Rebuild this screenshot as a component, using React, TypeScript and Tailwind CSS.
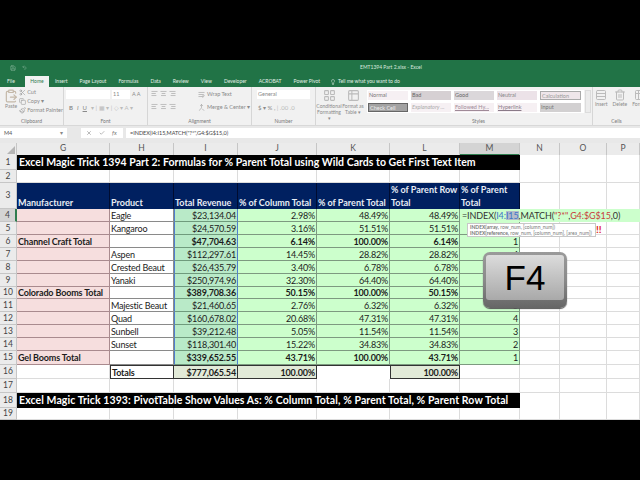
import { ClipboardPaste, Scissors, Copy, Paintbrush, X, Check, Lightbulb, Undo2, Save, AlignLeft, AlignCenter, AlignRight, WrapText, Merge, Table2, LayoutGrid, Rows3, Trash2 } from "lucide-react";

const cols = "grid grid-cols-[17px_93px_64px_64px_79px_73px_70px_60px_40px_47px_33px]";
const pink = "bg-[#f6dede] border-b border-r border-b-[#a98a8e] border-r-[#a98a8e]";
const green = "bg-[#ccffcc] border-b border-r border-[#7d9a80]";
const white = "bg-white border-b border-r border-[#8a8a8a]";
const rev = "bg-[#b9eac8] border-b border-x border-b-[#6f9a7c] border-x-[#4f7fd0]";
const grid = "bg-white border-b border-r border-[#dcdcdc]";

const data: [number, string, string, string, string, string, string, string, number, boolean][] = [
  [5, "", "Kangaroo", "$24,570.59", "3.16%", "51.51%", "51.51%", "", 13, false],
  [6, "Channel Craft Total", "", "$47,704.63", "6.14%", "100.00%", "6.14%", "1", 13, true],
  [7, "", "Aspen", "$112,297.61", "14.45%", "28.82%", "28.82%", "4", 13, false],
  [8, "", "Crested Beaut", "$26,435.79", "3.40%", "6.78%", "6.78%", "3", 13, false],
  [9, "", "Yanaki", "$250,974.96", "32.30%", "64.40%", "64.40%", "2", 13, false],
  [10, "Colorado Booms Total", "", "$389,708.36", "50.15%", "100.00%", "50.15%", "1", 12, true],
  [11, "", "Majestic Beaut", "$21,460.65", "2.76%", "6.32%", "6.32%", "5", 13, false],
  [12, "", "Quad", "$160,678.02", "20.68%", "47.31%", "47.31%", "4", 13, false],
  [13, "", "Sunbell", "$39,212.48", "5.05%", "11.54%", "11.54%", "3", 13, false],
  [14, "", "Sunset", "$118,301.40", "15.22%", "34.83%", "34.83%", "2", 13, false],
  [15, "Gel Booms Total", "", "$339,652.55", "43.71%", "100.00%", "43.71%", "1", 14, true],
];

const styleCells = [
  ["Normal", "bg-[#f6f0f3] text-[#777]"],
  ["Bad", "bg-[#d6d0d3] text-[#666]"],
  ["Good", "bg-[#dbd7da] text-[#666]"],
  ["Neutral", "bg-[#ece2e8] text-[#888]"],
  ["Calculation", "bg-[#efe6ea] text-[#999] border border-[#aaa]"],
  ["Check Cell", "bg-[#a3a3a3] text-[#eee] border border-[#666]"],
  ["Explanatory ...", "bg-[#f6f0f3] text-[#aaa] italic"],
  ["Followed Hy...", "bg-[#f6f0f3] text-[#a08a98] underline"],
  ["Hyperlink", "bg-[#f6f0f3] text-[#8a7a88] underline"],
  ["Input", "bg-[#d2d0d1] text-[#777]"],
];

function Num({ n, h, active }: { n: number; h: number; active?: boolean }) {
  return (
    <div
      style={{ height: h }}
      className={`flex items-center justify-center border-b border-r border-[#c6c6c6] text-[8.5px] text-[#444] ${active ? "bg-[#d4d4d4] border-r-[#2f7d4f] border-r-2" : "bg-[#ebebeb]"}`}
    >
      {n}
    </div>
  );
}

function Cell({ c, t, bold, right, h }: { c: string; t?: string; bold?: boolean; right?: boolean; h: number }) {
  return (
    <div
      style={{ height: h }}
      className={`flex items-center overflow-hidden whitespace-nowrap px-[1px] text-[9px] leading-none text-[#1c1c1c] ${c} ${bold ? "font-bold tracking-[-0.15px]" : "tracking-[-0.2px]"} ${right ? "justify-end" : ""}`}
    >
      {t}
    </div>
  );
}

function Blank({ n }: { n: number }) {
  return (
    <>
      {Array.from({ length: n }).map((_, i) => (
        <div key={i} className="border-b border-r border-[#dcdcdc] bg-white" />
      ))}
    </>
  );
}

function Group({ label, w, children }: { label: string; w: string; children: React.ReactNode }) {
  return (
    <div className={`flex flex-col border-r border-[#d6d6d6] ${w}`}>
      <div className="flex-1 min-h-0">{children}</div>
      <div className="h-[8px] text-center text-[5px] leading-[8px] text-[#777]">{label}</div>
    </div>
  );
}

function Ribbon() {
  const ic = "h-[7px] w-[7px] text-[#9a9a9a]";
  return (
    <div className="flex h-[39px] overflow-hidden bg-[#f1f1f1] text-[5.5px] text-[#8a8a8a] border-b border-[#d8d8d8]">
      <Group label="Clipboard" w="w-[64px] shrink-0">
        <div className="flex pt-[2px] pl-[4px]">
          <div className="flex w-[15px] flex-col items-center">
            <ClipboardPaste className="h-[14px] w-[14px] text-[#c4b8a8]" />
            <span className="text-[5px]">Paste</span>
          </div>
          <div className="ml-[1px] flex flex-col gap-[2px] whitespace-nowrap leading-[7px]">
            <span className="flex items-center gap-[1px]"><Scissors className={ic} />Cut</span>
            <span className="flex items-center gap-[1px]"><Copy className={ic} />Copy ▾</span>
            <span className="flex items-center gap-[1px]"><Paintbrush className={ic} />Format Painter</span>
          </div>
        </div>
      </Group>
      <Group label="Font" w="w-[84px] shrink-0">
        <div className="flex gap-[2px] pt-[3px] pl-[2px]">
          <div className="h-[9px] w-[44px] bg-white" />
          <div className="h-[9px] w-[18px] bg-white pl-[1px] leading-[9px]">11</div>
          <span className="leading-[9px]">A A</span>
        </div>
        <div className="flex gap-[4px] pt-[4px] pl-[5px] text-[6px]">
          <b>B</b><i>I</i><u>U</u><span className="whitespace-nowrap text-[#bbb]">▾ | ▦ ▾ | ◇ ▾ A ▾</span>
        </div>
      </Group>
      <Group label="Alignment" w="w-[104px] shrink-0">
        <div className="flex gap-[2px] pt-[3px] pl-[3px]">
          <AlignLeft className={ic} /><AlignCenter className={ic} /><AlignRight className={ic} />
          <span className="ml-[20px] flex items-center gap-[2px] whitespace-nowrap"><WrapText className={ic} />Wrap Text</span>
        </div>
        <div className="flex gap-[2px] pt-[5px] pl-[3px]">
          <AlignLeft className={ic} /><AlignCenter className={ic} /><AlignRight className={ic} />
          <span className="ml-[20px] flex items-center gap-[2px] whitespace-nowrap"><Merge className={ic} />Merge &amp; Center ▾</span>
        </div>
      </Group>
      <Group label="Number" w="w-[64px] shrink-0">
        <div className="mx-[5px] mt-[3px] h-[9px] bg-white pl-[1px] leading-[9px]">General</div>
        <div className="whitespace-nowrap pt-[4px] pl-[6px] text-[6px]">$ ▾ % , <span className="text-[#bbb]">| .00 .0</span></div>
      </Group>
      <Group label="" w="w-[49px] shrink-0 border-r-0">
        <div className="flex pt-[2px] text-center text-[5px] leading-[6px]">
          <div className="flex w-[26px] flex-col items-center"><LayoutGrid className="mb-[1px] h-[13px] w-[13px] text-[#bbb]" />Conditional Formatting ▾</div>
          <div className="flex w-[22px] flex-col items-center"><Table2 className="mb-[1px] h-[13px] w-[13px] text-[#bbb]" />Format as Table ▾</div>
        </div>
      </Group>
      <Group label="Styles" w="w-[228px] shrink-0">
        <div className="mt-[3px] ml-[2px] flex">
          <div className="grid w-[217px] grid-cols-[40px_40px_40px_40px_41px] gap-x-[3px] gap-y-[3px] bg-white p-[1px]">
            {styleCells.map(([t, c]) => (
              <div key={t} className={`h-[9px] overflow-hidden whitespace-nowrap pl-[1px] text-[5.5px] leading-[8px] ${c}`}>{t}</div>
            ))}
          </div>
          <div className="ml-[1px] w-[6px] border border-[#dcdcdc] bg-[#ececec]" />
        </div>
      </Group>
      <Group label="Cells" w="min-w-0 flex-1 overflow-hidden border-r-0">
        <div className="flex gap-[5px] pt-[2px] pl-[2px] text-center text-[5px]">
          <div className="flex flex-col items-center"><Rows3 className="h-[12px] w-[12px] text-[#bbb]" />Insert</div>
          <div className="flex flex-col items-center"><Trash2 className="h-[12px] w-[12px] text-[#bbb]" />Delete</div>
          <div className="flex flex-col items-center"><Table2 className="h-[12px] w-[12px] text-[#bbb]" />Format</div>
        </div>
      </Group>
    </div>
  );
}

export default function App() {
  const tabs = ["Insert", "Page Layout", "Formulas", "Data", "Review", "View", "Developer", "ACROBAT", "Power Pivot"];
  const letters = ["G", "H", "I", "J", "K", "L", "M", "N", "O", "P"];
  return (
    <div className="relative flex h-[480px] w-[640px] flex-col overflow-hidden bg-black font-['Lato',sans-serif]">
      <div className="h-[60px] shrink-0" />
      {/* title bar and tabs */}
      <div className="flex h-[15px] shrink-0 items-center bg-[#217346] text-[5px] text-[#d8e8de]">
        <Save className="ml-[10px] h-[6px] w-[6px] opacity-60" />
        <Undo2 className="ml-[6px] h-[5px] w-[5px] opacity-60" />
        <span className="ml-[333px]">EMT1394 Part 2.xlsx - Excel</span>
      </div>
      <div className="flex h-[12px] shrink-0 items-end whitespace-nowrap bg-[#217346] text-[5px] leading-[11px] text-[#e2efe7]">
        <span className="ml-[7px] w-[18px]">File</span>
        <span className="w-[24px] bg-[#f1f1f1] text-center text-[#2d7a4e]">Home</span>
        <div className="ml-[6px] flex gap-[12px]">
          {tabs.map((t) => <span key={t}>{t}</span>)}
        </div>
        <span className="ml-[10px] flex items-center gap-[2px]"><Lightbulb className="h-[6px] w-[6px]" />Tell me what you want to do</span>
      </div>
      <Ribbon />
      {/* formula bar */}
      <div className="h-[17px] shrink-0 bg-[#e8e8e8] pt-[2px]">
        <div className="flex h-[10px] text-[5.5px] leading-[10px] text-[#555]">
          <div className="flex w-[67px] justify-between bg-white px-[4px]"><span>M4</span><span className="text-[#888]">▾</span></div>
          <div className="ml-[14px] flex w-[42px] items-center gap-[7px] bg-white pl-[5px] text-[#777]">
            <X className="h-[6px] w-[6px]" /><Check className="h-[6px] w-[6px]" /><i className="text-[6px]">fx</i>
          </div>
          <div className="ml-[3px] flex-1 bg-white pl-[4px] text-[#444]">=INDEX(I4:I15,MATCH("?*",G4:$G$15,0)</div>
        </div>
      </div>
      {/* column letters */}
      <div className={`${cols} h-[12px] shrink-0 bg-[#ebebeb] text-center text-[8.5px] leading-[11px] text-[#555]`}>
        <div className="flex items-end justify-end border-b border-r border-[#c6c6c6] pr-[1px] pb-[1px]">
          <svg width="8" height="8" viewBox="0 0 8 8"><path d="M8 0V8H0Z" fill="#b5b5b5" /></svg>
        </div>
        {letters.map((l) => (
          <div key={l} className={`border-b border-r border-[#c6c6c6] ${l === "M" ? "bg-[#d4d4d4] border-b-2 border-b-[#2f7d4f]" : ""}`}>{l}</div>
        ))}
      </div>
      {/* sheet */}
      <div className="h-[265px] shrink-0 bg-white">
        <div className={`${cols} h-[15px]`}>
          <Num n={1} h={15} />
          <div className="col-span-7 flex items-center whitespace-nowrap bg-black pl-[2px] text-[10.5px] font-bold tracking-[0.03px] text-white">
            Excel Magic Trick 1394 Part 2: Formulas for % Parent Total using Wild Cards to Get First Text Item
          </div>
          <Blank n={3} />
        </div>
        <div className={`${cols} h-[13px]`}>
          <Num n={2} h={13} />
          <Blank n={10} />
        </div>
        <div className={`${cols} h-[26px]`}>
          <Num n={3} h={26} />
          {[
            ["Manufacturer", "border-b-[#c04040]"],
            ["Product", "border-b-[#001a50]"],
            ["Total Revenue", "border-b-[#4f7fd0]"],
            ["% of Column Total", "border-b-[#001a50]"],
            ["% of Parent Total", "border-b-[#001a50]"],
            ["% of Parent Row Total", "border-b-[#001a50]"],
            ["% of Parent Total", "border-b-[#001a50]"],
          ].map(([t, c], i) => (
            <div key={i} className={`flex items-end border-b border-r border-r-[#000c30] bg-[#002060] px-[1px] pb-[1px] text-[9px] leading-[13px] font-bold text-[#e8ecf4] ${c} ${i > 4 ? "whitespace-normal" : "whitespace-nowrap"}`}>
              {t}
            </div>
          ))}
          <Blank n={3} />
        </div>
        <div className={`${cols} h-[13px]`}>
          <Num n={4} h={13} active />
          <Cell h={13} c={pink} />
          <Cell h={13} c={white} t="Eagle" />
          <Cell h={13} c={rev} t="$23,134.04" right />
          <Cell h={13} c={green} t="2.98%" right />
          <Cell h={13} c={green} t="48.49%" right />
          <Cell h={13} c={green} t="48.49%" right />
          <div className="col-span-4 flex items-center whitespace-nowrap bg-[#ccffcc] pl-[2px] text-[9px] leading-none tracking-[-0.1px] text-[#333]">
            =INDEX(<span className="text-[#3f74c8]">I4:</span><span className="bg-[#b4bcc8] text-[#3f74c8]">I15</span>,MATCH(<span className="text-[#c8403c]">"?*"</span>,<span className="text-[#c8403c]">G4:$G$15</span>,0)
          </div>
        </div>
        {data.map(([n, g, h, i, j, k, l, m, rh, b]) => (
          <div key={n} className={cols}>
            <Num n={n} h={rh} />
            <Cell h={rh} c={pink} t={g} bold={b} />
            <Cell h={rh} c={white} t={h} />
            <Cell h={rh} c={n === 15 ? `${rev} border-b-[#4f7fd0]` : rev} t={i} right bold={b} />
            <Cell h={rh} c={green} t={j} right bold={b} />
            <Cell h={rh} c={green} t={k} right bold={b} />
            <Cell h={rh} c={green} t={l} right bold={b} />
            <Cell h={rh} c={green} t={m} right />
            <Blank n={3} />
          </div>
        ))}
        <div className={`${cols} h-[14px]`}>
          <Num n={16} h={14} />
          <Cell h={14} c={grid} />
          <Cell h={14} c="bg-white border-y border-r border-[#333] border-l" t="Totals" bold />
          <Cell h={14} c="bg-[#e2ead8] border-y border-r border-[#333]" t="$777,065.54" right bold />
          <Cell h={14} c="bg-[#e2ead8] border-y border-r border-[#333]" t="100.00%" right bold />
          <Cell h={14} c="bg-white border-t border-[#333] border-b-[#dcdcdc]" />
          <Cell h={14} c="bg-[#e2ead8] border-y border-x border-[#333]" t="100.00%" right bold />
          <Blank n={4} />
        </div>
        <div className={`${cols} h-[14px]`}>
          <Num n={17} h={14} />
          <Blank n={10} />
        </div>
        <div className={`${cols} h-[15px]`}>
          <Num n={18} h={15} />
          <div className="col-span-7 flex items-center whitespace-nowrap bg-black pl-[2px] text-[10.5px] font-bold tracking-[0.09px] text-white">
            Excel Magic Trick 1393: PivotTable Show Values As: % Column Total, % Parent Total, % Parent Row Total
          </div>
          <Blank n={3} />
        </div>
        <div className={`${cols} h-[12px]`}>
          <Num n={19} h={12} />
          <Blank n={10} />
        </div>
      </div>
      {/* function tooltip */}
      <div className="absolute left-[467px] top-[223px] h-[14px] w-[129px] border border-[#c8c8c8] bg-white px-[2px] text-[5px] leading-[6px] whitespace-nowrap text-[#777]">
        <div><b>INDEX(array,</b> row_num, [column_num])</div>
        <div><b>INDEX(reference,</b> row_num, [column_num], [area_num])</div>
      </div>
      <div className="absolute left-[596px] top-[223px] text-[10px] leading-[13px] font-bold text-[#e02020]">!!</div>
      {/* F4 key */}
      <div className="absolute left-[483px] top-[252px] h-[56px] w-[84px] rounded-[7px] bg-gradient-to-b from-[#9a9a9a] via-[#8a8a8a] to-[#666] p-[3px] pb-[8px] shadow-[0_1px_1px_#555]">
        <div className="flex h-full items-center justify-center rounded-[3px] bg-gradient-to-b from-[#dcdcdc] to-[#a9a9a9] font-['Liberation_Sans',sans-serif] text-[35px] leading-none text-black">
          F4
        </div>
      </div>
    </div>
  );
}
